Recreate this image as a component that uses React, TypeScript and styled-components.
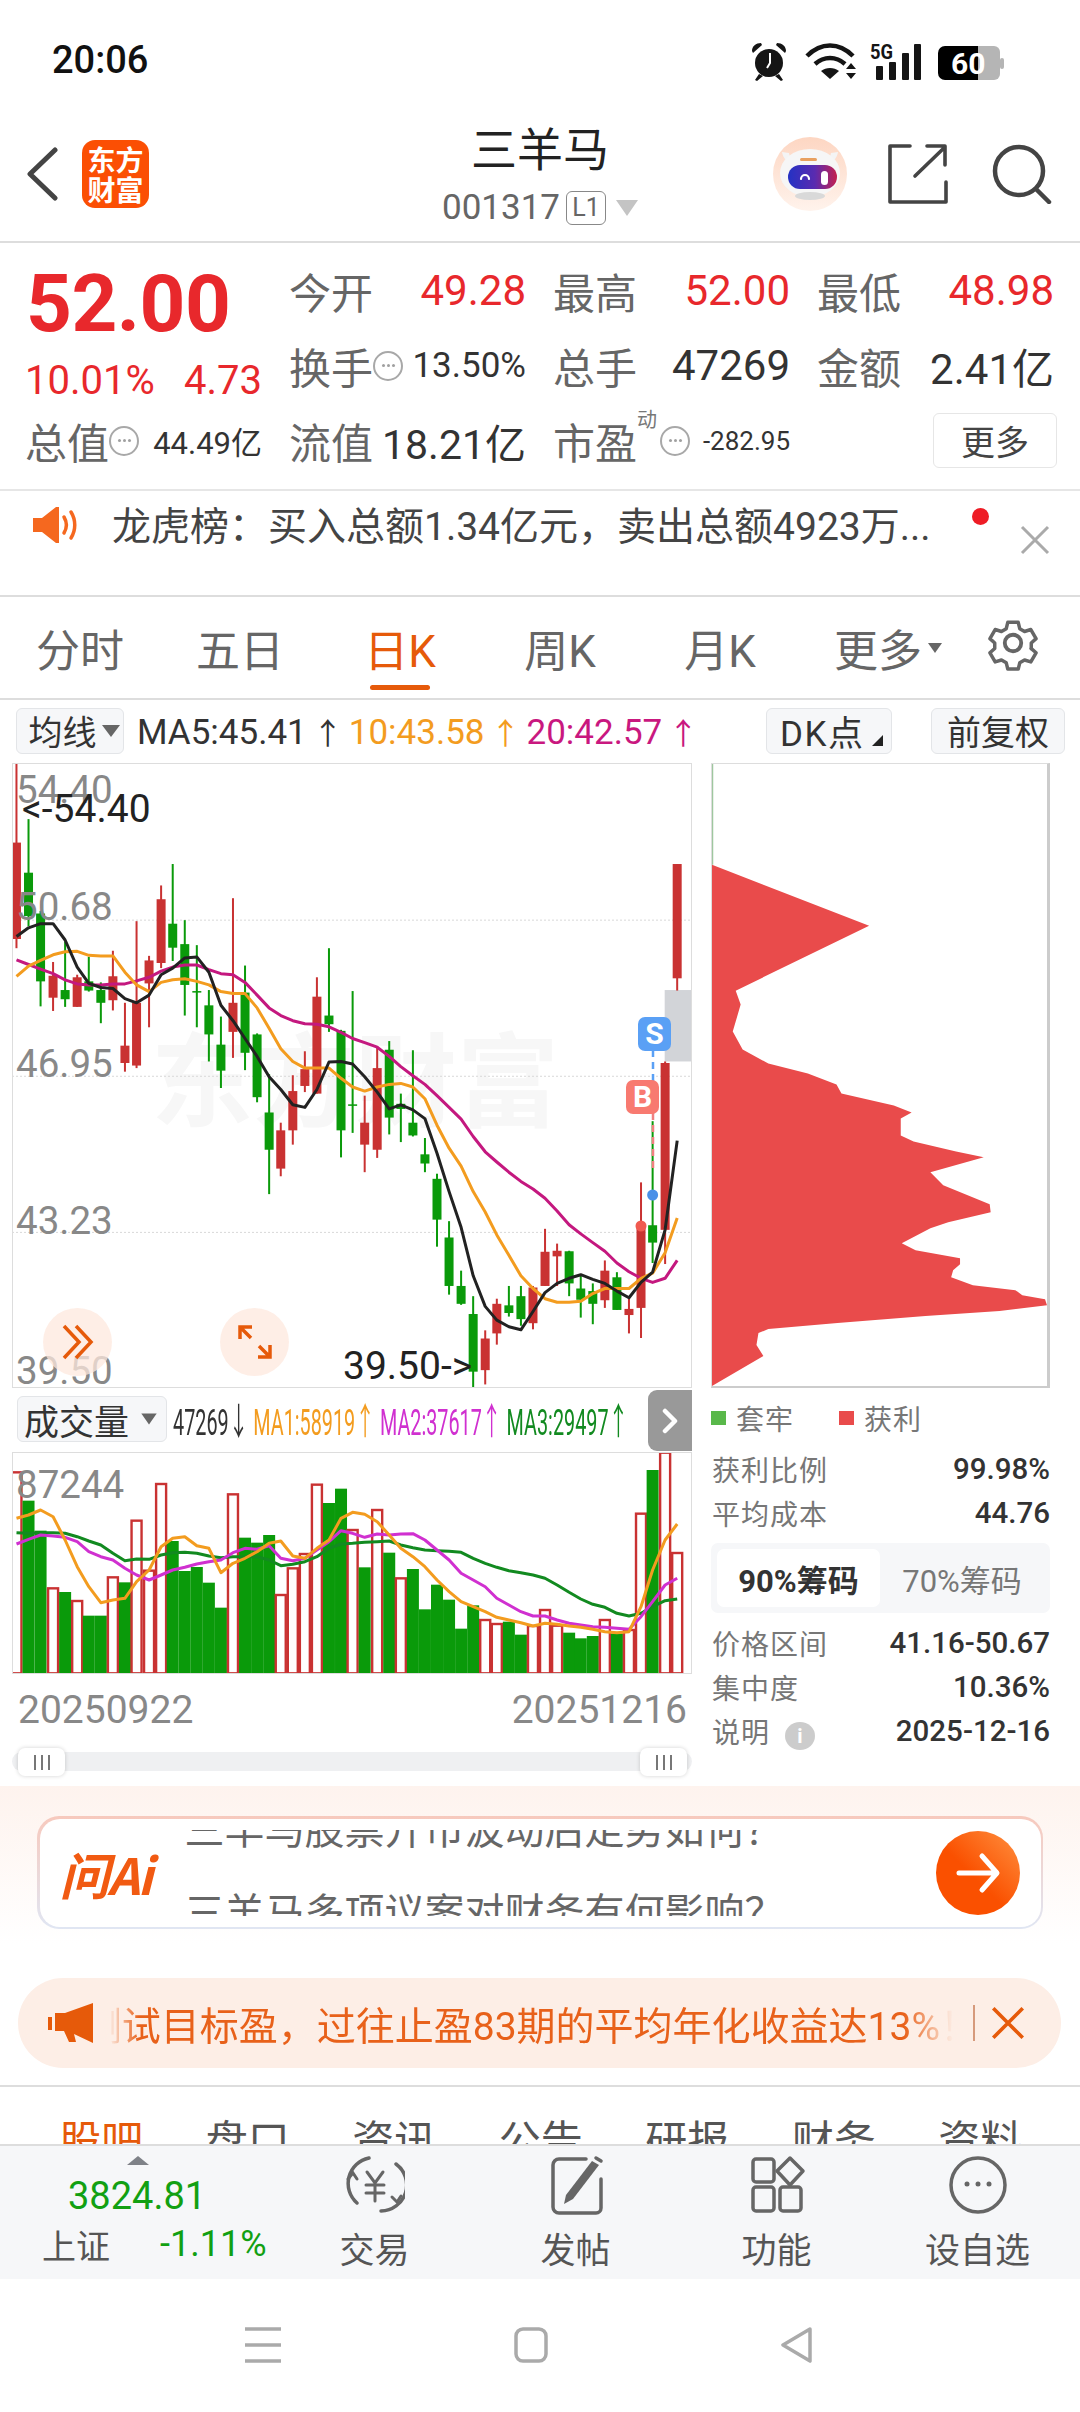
import React from 'react';
import styled, { createGlobalStyle } from 'styled-components';

const GlobalStyle = createGlobalStyle`
  * { box-sizing: border-box; }
  html, body { margin: 0; padding: 0; background: #fff; }
  body { font-family: Roboto, "Noto Sans CJK SC", sans-serif; color: #333; }
`;

const RED = '#e8282c';
const CANDLE_RED = '#c93232';
const CANDLE_GREEN = '#0a9a0a';
const ORANGE = '#e65a0a';

// [x, up?, wickTop, bodyTop, bodyBottom, wickBottom] in chart grid units
type Candle = [number, boolean, number, number, number, number];
const candles: Candle[] = [
  [38, true, 320, 476, 665, 683], [65, false, 430, 535, 620, 640], [92, false, 610, 615, 748, 797],
  [120, true, 710, 737, 780, 806], [147, false, 670, 765, 783, 798], [174, true, 735, 740, 798, 798],
  [200, false, 700, 748, 766, 768], [227, false, 750, 765, 790, 830], [254, true, 688, 738, 785, 805],
  [281, true, 790, 874, 908, 925], [307, true, 630, 790, 913, 918], [335, true, 698, 707, 752, 838],
  [362, true, 560, 587, 712, 722], [388, false, 518, 635, 682, 708], [415, false, 628, 675, 755, 815],
  [442, false, 677, 767, 770, 838], [469, false, 765, 795, 852, 905], [496, false, 817, 872, 923, 957],
  [523, true, 585, 790, 847, 898], [550, false, 717, 770, 888, 922], [577, false, 850, 852, 975, 985],
  [604, false, 930, 1005, 1078, 1165], [630, true, 1025, 1040, 1115, 1130], [657, true, 932, 963, 1040, 1068],
  [684, true, 885, 920, 953, 965], [711, true, 740, 778, 968, 968], [738, false, 683, 815, 832, 847],
  [765, false, 843, 845, 1040, 1093], [791, false, 767, 989, 992, 1045], [818, true, 972, 1025, 1068, 1122],
  [846, true, 875, 918, 1078, 1094], [873, false, 865, 882, 1015, 1048], [899, false, 968, 988, 998, 1063],
  [926, false, 883, 1025, 1050, 1052], [953, false, 1055, 1087, 1105, 1122], [980, false, 1125, 1135, 1215, 1268],
  [1007, false, 1218, 1250, 1345, 1362], [1034, false, 1315, 1345, 1380, 1382], [1061, false, 1365, 1400, 1513, 1545],
  [1088, true, 1432, 1448, 1510, 1538], [1114, true, 1370, 1380, 1438, 1460], [1141, false, 1345, 1383, 1398, 1405],
  [1168, false, 1345, 1365, 1410, 1423], [1195, true, 1345, 1348, 1418, 1430], [1222, true, 1233, 1278, 1345, 1345],
  [1249, true, 1262, 1276, 1287, 1345], [1276, false, 1276, 1277, 1340, 1365], [1302, false, 1322, 1350, 1372, 1407],
  [1329, false, 1340, 1355, 1380, 1420], [1356, true, 1295, 1315, 1373, 1388], [1383, false, 1318, 1328, 1392, 1392],
  [1410, true, 1370, 1390, 1402, 1438], [1437, true, 1142, 1230, 1388, 1447], [1463, false, 1022, 1226, 1260, 1300],
  [1491, true, 905, 908, 1235, 1302], [1518, true, 518, 518, 742, 766],
];

const ma5 = [660,643,635,635,667,720,752,760,762,782,790,775,735,722,702,700,730,795,825,860,895,935,960,990,995,960,906,905,910,935,965,998,990,1000,1017,1085,1160,1230,1325,1385,1412,1425,1431,1395,1358,1340,1330,1323,1332,1340,1355,1368,1338,1318,1235,1060];
const ma10 = [738,718,707,696,690,689,697,698,698,730,755,768,750,745,743,748,755,768,772,772,800,840,880,905,918,918,918,938,955,963,955,950,948,955,978,1030,1075,1110,1160,1200,1245,1285,1325,1350,1370,1377,1377,1375,1360,1350,1350,1350,1330,1320,1280,1212];
const ma20 = [706,715,724,733,745,753,755,755,753,753,747,740,728,720,716,716,725,733,735,750,775,800,815,825,831,832,837,848,860,868,877,895,915,933,950,972,995,1018,1052,1082,1102,1122,1140,1155,1173,1198,1225,1243,1260,1277,1300,1317,1330,1338,1330,1295];

const volumeTops = [277,362,452,625,636,663,707,707,592,607,422,572,312,483,573,561,608,683,343,473,488,465,645,565,522,314,369,326,450,562,390,518,595,567,688,614,659,746,676,720,732,725,764,738,690,737,758,775,768,720,760,750,401,270,218,519];
const volumeUp = [1,0,0,1,0,1,0,0,1,0,1,1,1,0,0,0,0,0,1,0,0,0,1,1,1,1,0,0,1,0,1,0,1,0,0,0,0,0,0,1,1,0,0,1,1,1,0,0,0,1,0,1,1,0,1,1];
const volMa1 = [415,405,390,410,480,560,620,668,660,655,605,570,500,475,470,497,505,578,550,535,515,490,483,528,535,505,480,415,397,403,425,465,505,530,560,600,635,665,680,695,712,720,728,738,730,733,738,742,748,755,758,755,680,570,480,432];
const volMa2 = [492,478,465,468,472,485,515,530,540,565,585,600,585,570,562,552,545,540,518,505,508,497,535,542,535,510,485,452,460,472,462,465,462,461,480,510,540,580,600,620,655,675,695,708,708,720,730,735,740,742,745,748,710,665,615,595];
const volMa3 = [458,460,458,458,460,470,483,495,520,542,537,538,525,518,517,520,528,533,530,530,530,540,557,553,545,530,505,492,490,487,485,483,495,503,510,512,514,517,535,550,562,572,578,585,595,615,637,657,673,682,700,708,700,680,662,657];

// chip distribution outline, x from the left axis, y from the top of the box
const chipOutline =
  '0,101 159,162 24,227 29,241 21,268 31,286 57,300 97,310 126,321 131,330 184,342 202,349 191,355 191,372 ' +
  '204,378 247,388 275,394 221,409 234,422 281,441 282,449 239,459 221,465 192,480 206,487 251,495 251,501 ' +
  '244,507 242,514 264,522 307,527 314,532 337,536 339,542 291,548 216,553 127,560 57,566 47,570 45,582 52,593 0,623';

const px = (v: number) => (v - 28) / 2.24;
const py = (v: number) => (v - 320) / 1.96;
const vy = (v: number) => (v - 216) / 3;
const xs = candles.map((c) => px(c[0]));
const line = (values: number[], map: (v: number) => number) =>
  values.map((v, i) => `${xs[i].toFixed(1)},${map(v).toFixed(1)}`).join(' ');

const Page = styled.div`
  width: 1080px;
  height: 2412px;
  overflow: hidden;
  display: flex;
  flex-direction: column;
  background: #fff;
`;

const StatusBar = styled.div`
  height: 110px;
  flex: none;
  padding: 40px 74px 0 52px;
  display: flex;
  justify-content: space-between;
  align-items: flex-start;
`;

const Clock = styled.span`
  font-size: 38px;
  line-height: 40px;
  font-weight: 500;
  color: #111;
`;

const StatusIcons = styled.div`
  display: flex;
  align-items: center;
  height: 40px;
  margin-top: 2px;
`;

const Header = styled.header`
  height: 133px;
  flex: none;
  display: grid;
  grid-template-columns: 1fr auto 1fr;
  border-bottom: 2px solid #ddd;
`;

const HeaderLeft = styled.div`
  display: flex;
  align-items: center;
  padding: 0 0 4px 26px;
  gap: 24px;
`;

const AppLogo = styled.div`
  width: 67px;
  height: 68px;
  border-radius: 13px;
  background: #fb4f04;
  color: #fff;
  font-family: "Noto Sans CJK SC", sans-serif;
  font-size: 28px;
  line-height: 30px;
  font-weight: 700;
  text-align: center;
  padding-top: 4px;
  white-space: nowrap;
`;

const TitleBlock = styled.div`
  display: flex;
  flex-direction: column;
  align-items: center;
  padding-top: 14px;
`;

const StockName = styled.div`
  font-size: 46px;
  line-height: 52px;
  color: #222;
`;

const CodeRow = styled.div`
  display: flex;
  align-items: center;
  font-size: 35px;
  line-height: 44px;
  color: #666;
  margin: 10px 0 0 0;
`;

const LevelBadge = styled.span`
  border: 1.5px solid #888;
  border-radius: 6px;
  font-size: 25px;
  line-height: 32px;
  width: 40px;
  text-align: center;
  margin-left: 6px;
`;

const DownTriangle = styled.span<{ $color?: string }>`
  width: 0;
  height: 0;
  margin-left: 10px;
  border-left: 11px solid transparent;
  border-right: 11px solid transparent;
  border-top: 16px solid ${(p) => p.$color ?? '#c4c4c4'};
`;

const HeaderRight = styled.div`
  display: flex;
  align-items: center;
  justify-content: flex-end;
  padding: 0 28px 4px 0;
`;

const QuoteGrid = styled.section`
  height: 248px;
  flex: none;
  padding: 10px 24px 0 25px;
  display: grid;
  grid-template-columns: repeat(4, 237px);
  grid-auto-rows: 75px;
  column-gap: 27px;
  border-bottom: 2px solid #e6e6e6;
`;

const Cell = styled.div`
  display: flex;
  align-items: center;
  justify-content: space-between;
  white-space: nowrap;
`;

const LastPrice = styled.div`
  font-size: 80px;
  line-height: 75px;
  font-weight: 700;
  color: ${RED};
  margin: 14px 0 0 1px;
  letter-spacing: -0.5px;
`;

const ChangeCell = styled(Cell)`
  padding-top: 30px;
  font-size: 40px;
  color: ${RED};
`;

const Label = styled.span`
  font-size: 42px;
  color: #666;
`;

const LabelGroup = styled.span`
  display: flex;
  align-items: center;
  position: relative;
`;

const Value = styled.span<{ $size?: number; $red?: boolean }>`
  font-size: ${(p) => p.$size ?? 42}px;
  color: ${(p) => (p.$red ? RED : '#333')};
`;

const HelpDot = styled.span<{ $gap?: number }>`
  width: 30px;
  height: 30px;
  border-radius: 50%;
  border: 2px solid #a8a8a8;
  margin-left: ${(p) => p.$gap ?? 0}px;
  display: flex;
  align-items: center;
  justify-content: center;
  &::before {
    content: '';
    width: 3px;
    height: 3px;
    border-radius: 50%;
    background: #a0a0a0;
    box-shadow: -5px 0 #a0a0a0, 5px 0 #a0a0a0;
  }
`;

const Superscript = styled.span`
  position: absolute;
  left: 84px;
  top: -6px;
  font-size: 20px;
  color: #777;
`;

const MoreButton = styled.button`
  margin: 0 -3px 0 auto;
  width: 124px;
  height: 55px;
  border: 1.5px solid #e6e6e6;
  border-radius: 6px;
  background: #fff;
  font-family: inherit;
  font-size: 34px;
  color: #444;
  padding: 0;
`;

const Notice = styled.section`
  height: 106px;
  flex: none;
  position: relative;
  padding: 16px 0 0 33px;
  display: flex;
  align-items: flex-start;
  border-bottom: 2px solid #ddd;
`;

const NoticeText = styled.span`
  margin-left: 34px;
  font-size: 39px;
  line-height: 40px;
  color: #444;
  white-space: nowrap;
`;

const NoticeDot = styled.span`
  position: absolute;
  left: 972px;
  top: 17px;
  width: 17px;
  height: 17px;
  border-radius: 50%;
  background: #ee1c25;
`;

const NoticeClose = styled.span`
  position: absolute;
  left: 1020px;
  top: 34px;
  display: flex;
`;

const ChartTabs = styled.nav`
  height: 103px;
  flex: none;
  display: grid;
  grid-template-columns: repeat(5, 160px) 176px 104px;
  border-bottom: 2px solid #ddd;
`;

const ChartTab = styled.div<{ $active?: boolean }>`
  position: relative;
  display: flex;
  align-items: center;
  justify-content: center;
  padding-bottom: 0;
  font-size: 44px;
  color: ${(p) => (p.$active ? ORANGE : '#666')};
  &::after {
    content: '';
    display: ${(p) => (p.$active ? 'block' : 'none')};
    position: absolute;
    left: 50px;
    right: 50px;
    bottom: 8px;
    height: 5px;
    border-radius: 3px;
    background: ${ORANGE};
  }
`;

const TabArrow = styled.span`
  width: 0;
  height: 0;
  margin-left: 6px;
  border-left: 7px solid transparent;
  border-right: 7px solid transparent;
  border-top: 10px solid #666;
`;

const Toolbar = styled.div`
  height: 61px;
  flex: none;
  display: flex;
  align-items: center;
  padding: 0 15px 0 16px;
  white-space: nowrap;
`;

const ToolButton = styled.div<{ $width: number }>`
  width: ${(p) => p.$width}px;
  height: 46px;
  flex: none;
  display: flex;
  align-items: center;
  justify-content: center;
  gap: 5px;
  background: #f6f7f9;
  border: 1.5px solid #e3e5e8;
  border-radius: 6px;
  font-size: 34px;
  color: #333;
  position: relative;
`;

const MaSelect = styled(ToolButton)`
  padding-left: 8px;
  & > span {
    margin-left: 0;
    border-left-width: 9px;
    border-right-width: 9px;
    border-top-width: 12px;
  }
`;

const DkButton = styled(ToolButton)`
  justify-content: flex-start;
  padding-left: 13px;
  font-size: 35px;
  letter-spacing: 1.5px;
`;

const CornerMark = styled.span`
  position: absolute;
  right: 8px;
  bottom: 7px;
  width: 0;
  height: 0;
  border-left: 11px solid transparent;
  border-bottom: 11px solid #222;
`;

const MaLegend = styled.div`
  flex: 1;
  margin-left: 13px;
  font-size: 35px;
`;

const Tinted = styled.span<{ $color: string }>`
  color: ${(p) => p.$color};
`;

const LegendArrow = styled.span`
  display: inline-block;
  width: 42px;
  text-align: center;
  font-size: 30px;
`;

const Workspace = styled.div`
  display: flex;
  align-items: flex-start;
  height: 1025px;
  flex: none;
  padding: 2px 0 0 12px;
`;

const ChartColumn = styled.div`
  width: 680px;
  flex: none;
  display: flex;
  flex-direction: column;
`;

const Canvas = styled.div<{ $height: number }>`
  position: relative;
  width: 680px;
  height: ${(p) => p.$height}px;
  border: 1.5px solid #ddd;
  overflow: hidden;
  & > svg {
    position: absolute;
    left: -1.5px;
    top: -1.5px;
    display: block;
  }
`;

const Watermark = styled.span`
  position: absolute;
  left: 138px;
  top: 255px;
  font-family: "Noto Sans CJK SC", sans-serif;
  font-size: 102px;
  line-height: 112px;
  font-weight: 700;
  color: #f7f7f7;
  white-space: nowrap;
`;

const AxisLabel = styled.span<{ $top: number }>`
  position: absolute;
  left: 3px;
  top: ${(p) => p.$top}px;
  font-size: 38.5px;
  line-height: 40px;
  color: #888;
  z-index: 2;
`;

const ExtremeLabel = styled.span<{ $left: number; $top: number }>`
  position: absolute;
  left: ${(p) => p.$left}px;
  top: ${(p) => p.$top}px;
  font-size: 39px;
  line-height: 40px;
  color: #222;
  z-index: 3;
`;

const TradeTag = styled.span<{ $left: number; $top: number; $bg: string }>`
  position: absolute;
  left: ${(p) => p.$left}px;
  top: ${(p) => p.$top}px;
  width: 33px;
  height: 34px;
  border-radius: 7px;
  background: ${(p) => p.$bg};
  color: #fff;
  font-size: 30px;
  line-height: 34px;
  font-weight: 700;
  text-align: center;
  z-index: 3;
`;

const RoundAction = styled.span<{ $left: number }>`
  position: absolute;
  left: ${(p) => p.$left}px;
  top: 544px;
  width: 69px;
  height: 68px;
  border-radius: 50%;
  background: rgba(253, 232, 222, 0.75);
  display: flex;
  align-items: center;
  justify-content: center;
  z-index: 2;
`;

const VolumeHeader = styled.div`
  position: relative;
  height: 64px;
  display: flex;
  align-items: center;
  padding: 0 0 2px 5px;
  white-space: nowrap;
`;

const VolumeSelect = styled(ToolButton)`
  height: 46px;
  font-size: 35px;
`;

const VolumeCaret = styled(DownTriangle)`
  margin-left: 4px;
  transform: scale(0.7);
`;

const VolumeLegend = styled.div`
  margin-left: 6px;
  font-size: 37px;
  transform: scaleX(0.535);
  transform-origin: left center;
`;

const CollapseTab = styled.span`
  position: absolute;
  right: 0;
  top: 2px;
  width: 44px;
  height: 61px;
  background: #999;
  border-radius: 9px 0 0 9px;
  display: flex;
  align-items: center;
  justify-content: center;
  z-index: 4;
`;

const DateRow = styled.div`
  height: 71px;
  display: flex;
  justify-content: space-between;
  align-items: center;
  padding: 0 5px 0 6px;
  font-size: 39px;
  color: #888;
`;

const RangeTrack = styled.div`
  position: relative;
  margin-top: 7px;
  height: 19px;
  background: #eff0f2;
  border-radius: 10px;
`;

const RangeHandle = styled.span<{ $side: 'left' | 'right' }>`
  position: absolute;
  ${(p) => p.$side}: ${(p) => (p.$side === 'left' ? 6 : 5)}px;
  top: -4px;
  width: 47px;
  height: 28px;
  border-radius: 7px;
  background: #fff;
  box-shadow: 0 0 4px rgba(0, 0, 0, 0.18);
  display: flex;
  align-items: center;
  justify-content: center;
  gap: 5px;
  & > i {
    width: 2px;
    height: 15px;
    background: #777;
  }
`;

const ChipColumn = styled.aside`
  width: 339px;
  margin-left: 19px;
  flex: none;
`;

const ChipBox = styled.div`
  height: 625px;
  border: 1.5px solid #ddd;
  border-right: 3px solid #ccc;
  border-bottom: 2px solid #ccc;
  & > svg {
    display: block;
  }
`;

const ChipLegend = styled.div`
  height: 59px;
  display: flex;
  align-items: center;
  font-size: 28px;
  color: #777;
  letter-spacing: 1px;
`;

const Swatch = styled.span<{ $color: string; $gap?: number }>`
  width: 15px;
  height: 14px;
  margin: 0 10px 0 ${(p) => p.$gap ?? 0}px;
  background: ${(p) => p.$color};
`;

const ChipRow = styled.div`
  height: 44px;
  display: flex;
  align-items: center;
  justify-content: space-between;
  padding-left: 1px;
  font-size: 28px;
  color: #777;
  letter-spacing: 1px;
  white-space: nowrap;
`;

const ChipValue = styled.span`
  font-weight: 500;
  color: #333;
  font-size: 29.5px;
  letter-spacing: 0;
`;

const InfoPill = styled.span`
  display: inline-block;
  width: 30px;
  height: 28px;
  margin-left: 15px;
  border-radius: 50%;
  background: #ccc;
  color: #fff;
  font-size: 20px;
  line-height: 28px;
  font-weight: 700;
  text-align: center;
  vertical-align: middle;
  letter-spacing: 0;
`;

const RatioSwitch = styled.div`
  height: 70px;
  margin: 8px 0 8px;
  padding: 6px;
  background: #f6f7f9;
  border-radius: 7px;
  display: grid;
  grid-template-columns: 163px 1fr;
`;

const RatioOption = styled.div<{ $active?: boolean }>`
  display: flex;
  align-items: center;
  justify-content: center;
  border-radius: 7px;
  font-size: 31px;
  font-weight: ${(p) => (p.$active ? 700 : 400)};
  color: ${(p) => (p.$active ? '#333' : '#777')};
  background: ${(p) => (p.$active ? '#fff' : 'transparent')};
`;

const AiSection = styled.section`
  height: 192px;
  flex: none;
  padding: 30px 37px 0 37px;
  background: linear-gradient(180deg, #fef3ee 0%, #fff 82%);
`;

const AiBorder = styled.div`
  height: 113px;
  padding: 2.5px;
  border-radius: 22px;
  background: linear-gradient(180deg, #f7c9bd 0%, #e0e6f3 100%);
`;

const AiCard = styled.div`
  height: 100%;
  border-radius: 20px;
  background: #fff;
  display: flex;
  align-items: center;
  padding: 0 21px 0 20px;
`;

const AiLogo = styled.span`
  width: 125px;
  font-family: "Noto Sans CJK SC", sans-serif;
  font-size: 50px;
  font-weight: 700;
  font-style: italic;
  color: #f15a12;
  flex: none;
  letter-spacing: -2px;
`;

const Prompts = styled.div`
  flex: 1;
  height: 86px;
  overflow: hidden;
  display: flex;
  flex-direction: column;
  justify-content: center;
  gap: 43px;
  font-size: 40px;
  color: #666;
  white-space: nowrap;
  & > span {
    flex: none;
    line-height: 40px;
  }
`;

const GoButton = styled.span`
  width: 84px;
  height: 84px;
  flex: none;
  border-radius: 50%;
  background: linear-gradient(45deg, #fa5000 45%, #ff9140 100%);
  display: flex;
  align-items: center;
  justify-content: center;
`;

const PromoBar = styled.div`
  height: 90px;
  flex: none;
  margin: 0 19px 0 18px;
  border-radius: 45px;
  background: #fdeee6;
  display: flex;
  align-items: center;
  padding: 0 22px 0 30px;
`;

const PromoHorn = styled.svg`
  flex: none;
`;

const PromoWindow = styled.div`
  width: 844px;
  margin-left: 15px;
  overflow: hidden;
  display: flex;
  justify-content: flex-end;
  white-space: nowrap;
  font-size: 39px;
  color: #e8611a;
  -webkit-mask-image: linear-gradient(90deg, transparent 0, #000 30px, #000 795px, transparent 100%);
  mask-image: linear-gradient(90deg, transparent 0, #000 30px, #000 795px, transparent 100%);
`;

const PromoText = styled.span`
  flex: none;
  margin-right: -26px;
`;

const PromoDivider = styled.span`
  width: 1.5px;
  height: 36px;
  margin: 0 16px 0 20px;
  background: #d69a7c;
`;

const StockTabs = styled.nav`
  height: 59px;
  flex: none;
  margin-top: 17px;
  border-top: 2px solid #ddd;
  overflow: hidden;
  display: grid;
  grid-template-columns: repeat(7, 146.5px);
  padding: 31px 0 0 28px;
`;

const StockTab = styled.span<{ $active?: boolean }>`
  font-size: 42px;
  line-height: 48px;
  text-align: center;
  color: ${(p) => (p.$active ? ORANGE : '#555')};
`;

const BottomBar = styled.div`
  height: 135px;
  flex: none;
  background: #f6f7f9;
  border-top: 2px solid #ddd;
  display: grid;
  grid-template-columns: 274px repeat(4, 201px);
`;

const IndexBlock = styled.div`
  position: relative;
  padding: 26px 0 0 42px;
  display: grid;
  grid-template-columns: 118px auto;
  grid-template-rows: 48px 48px;
  align-items: center;
`;

const IndexPrice = styled.span`
  grid-column: 1 / 3;
  padding-left: 26px;
  font-size: 38px;
  color: #12a012;
`;

const IndexName = styled.span`
  font-size: 34px;
  color: #555;
`;

const IndexChange = styled.span`
  font-size: 36px;
  color: #12a012;
`;

const IndexCaret = styled.span`
  position: absolute;
  left: 127px;
  top: 10px;
  width: 0;
  height: 0;
  border-left: 11px solid transparent;
  border-right: 11px solid transparent;
  border-bottom: 9px solid #7f8288;
`;

const BarAction = styled.div`
  display: flex;
  flex-direction: column;
  align-items: center;
  padding-top: 9px;
  font-size: 35px;
  line-height: 44px;
  color: #555;
  & > svg {
    margin-bottom: 15px;
  }
`;

const NavBar = styled.div`
  flex: 1;
  display: grid;
  grid-template-columns: 245px 35px 234px 34px 232px 33px;
  padding-top: 48px;
`;

const NavSpacer = styled.span``;

const NavDraw = styled.svg`
  display: block;
`;

const AvatarGap = styled.span`
  width: 40px;
`;

const ToolGap = styled.span`
  width: 39px;
  flex: none;
`;

// Status bar glyphs, all one drawing so the spacing stays fixed
const StatusGlyphs = () => (
  <svg width="256" height="40" viewBox="0 0 256 40">
    <g fill="#151515">
      <circle cx="19" cy="21" r="14" />
      <path d="M2 9c0-5 4-8 9-8l1 2-9 8zM36 9c0-5-4-8-9-8l-1 2 9 8z" />
      <path d="M9 32l-4 6 2 1 6-5zM29 32l4 6-2 1-6-5z" />
    </g>
    <path d="M20 11v10l-3 5" stroke="#fff" strokeWidth="2" fill="none" />
    <g fill="none" stroke="#151515" strokeWidth="4.5">
      <path d="M57 14c14-14 32-14 46 0" />
      <path d="M65 22c9-8 21-8 30 0" />
    </g>
    <path d="M80 37l-9-8c5-4 13-4 18 0z" fill="#151515" />
    <path d="M96 27l5-6 5 6zM96 31l5 6 5-6z" fill="#151515" />
    <text x="120" y="17" fontSize="20" fontWeight="700" fontFamily="Roboto" fill="#151515" textLength="23" lengthAdjust="spacingAndGlyphs">5G</text>
    <g fill="#151515">
      <rect x="126" y="24" width="7" height="14" rx="1" />
      <rect x="139" y="20" width="7" height="18" rx="1" />
      <rect x="152" y="11" width="7" height="27" rx="1" />
      <rect x="164" y="2" width="7" height="36" rx="1" />
    </g>
    <path d="M188 11a7 7 0 0 1 7-7h33v34h-33a7 7 0 0 1-7-7z" fill="#000" />
    <path d="M228 4h16a6 6 0 0 1 6 6v22a6 6 0 0 1-6 6h-16z" fill="#b5b5b5" />
    <rect x="250" y="16" width="4" height="11" rx="2" fill="#b5b5b5" />
    <text x="201" y="32" fontSize="30" fontWeight="700" fontFamily="Roboto" fill="#fff">60</text>
  </svg>
);

const BackIcon = () => (
  <svg width="32" height="54" viewBox="0 0 32 54">
    <path d="M29 3L4 27l25 24" fill="none" stroke="#444" strokeWidth="5" strokeLinecap="round" strokeLinejoin="round" />
  </svg>
);

const RobotAvatar = () => (
  <svg width="76" height="76" viewBox="0 0 76 76">
    <defs>
      <linearGradient id="avatarBg" x1="0" y1="0" x2="0" y2="1">
        <stop offset="0" stopColor="#fdd6c2" />
        <stop offset="1" stopColor="#fff3ec" />
      </linearGradient>
      <linearGradient id="visor" x1="0" y1="0" x2="1" y2="0">
        <stop offset="0" stopColor="#2432c4" />
        <stop offset="0.55" stopColor="#5a2bb0" />
        <stop offset="1" stopColor="#c4204f" />
      </linearGradient>
    </defs>
    <circle cx="38" cy="38" r="37" fill="url(#avatarBg)" />
    <path d="M10 16c1 6 4 9 9 10l-2-9zM66 16c-1 6-4 9-9 10l2-9z" fill="#f4f4f4" />
    <ellipse cx="38" cy="37" rx="30" ry="24" fill="#f6f6f6" />
    <ellipse cx="38" cy="60" rx="15" ry="4" fill="#d9d9d9" />
    <rect x="16" y="29" width="49" height="24" rx="12" fill="url(#visor)" />
    <path d="M29 43a4 4 0 0 1 8 0" stroke="#fff" strokeWidth="2.2" fill="none" strokeLinecap="round" />
    <rect x="49" y="35" width="7" height="14" rx="3.5" fill="#fff" />
    <rect x="28" y="22" width="17" height="3" rx="1.5" fill="#e8a060" />
  </svg>
);

const ShareIcon = () => (
  <svg width="60" height="60" viewBox="0 0 60 60" style={{ marginRight: 44 }}>
    <path d="M22 2H2v56h56V38" fill="none" stroke="#444" strokeWidth="3.6" strokeLinecap="round" strokeLinejoin="round" />
    <path d="M27 32L57 3M39 2h18v19" fill="none" stroke="#444" strokeWidth="3.6" strokeLinecap="round" strokeLinejoin="round" />
  </svg>
);

const SearchIcon = () => (
  <svg width="60" height="60" viewBox="0 0 60 60">
    <circle cx="27" cy="27" r="24" fill="none" stroke="#444" strokeWidth="4.5" />
    <path d="M44 45l13 13" stroke="#444" strokeWidth="4.5" strokeLinecap="round" />
  </svg>
);

const SpeakerIcon = () => (
  <svg width="45" height="36" viewBox="0 0 45 36">
    <path d="M0 11h9L23 0h3v36h-3L9 25H0z" fill="#f5681f" />
    <path d="M31 10c3 5 3 11 0 16M38 5c5 8 5 18 0 26" fill="none" stroke="#f5681f" strokeWidth="3.5" strokeLinecap="round" />
  </svg>
);

const CloseMark = ({ size, color, width }: { size: number; color: string; width: number }) => (
  <svg width={size} height={size} viewBox="0 0 30 30">
    <path d="M2 2l26 26M28 2L2 28" stroke={color} strokeWidth={width} fill="none" />
  </svg>
);

const GearIcon = () => (
  <svg width="58" height="58" viewBox="0 0 24 24" fill="none" stroke="#666" strokeWidth="1.6" strokeLinejoin="round" style={{ margin: 'auto', transform: 'translate(-15px,-5px)' }}>
    <path d="M9.6 2.5h4.8l.7 2.9 2.2 1.3 2.9-.9 2.4 4.2-2.2 2 0 2.6-.1-.1 2.3 2-2.4 4.2-2.9-.9-2.2 1.3-.7 2.9H9.6l-.7-2.9-2.2-1.3-2.9.9-2.4-4.2 2.2-2V12l-2.2-2 2.4-4.2 2.9.9 2.2-1.3z" transform="translate(1.2 1.2) scale(.9)" />
    <circle cx="12" cy="12" r="3.4" />
  </svg>
);

const PriceChart = () => (
  <svg width="680" height="625" viewBox="0 0 680 625">
    {[628, 934, 1240].map((y) => (
      <line key={y} x1="0" x2="680" y1={py(y)} y2={py(y)} stroke="#d8d8d8" strokeWidth="1" strokeDasharray="2 2" />
    ))}
    <rect x={px(1490)} y={py(765)} width="27" height={py(905) - py(765)} fill="#d2d4d8" />
    {candles.map(([x, up, wickTop, top, bottom, wickBottom]) => {
      const color = up ? CANDLE_RED : CANDLE_GREEN;
      return (
        <g key={x} fill={color}>
          <rect x={px(x) - 1} y={py(wickTop)} width="2" height={py(wickBottom) - py(wickTop)} />
          <rect x={px(x) - 4.5} y={py(top)} width="9" height={Math.max(py(bottom) - py(top), 1.5)} />
        </g>
      );
    })}
    <polyline points={line(ma20, py)} fill="none" stroke="#c4187f" strokeWidth="3" strokeLinejoin="round" />
    <polyline points={line(ma10, py)} fill="none" stroke="#f39c1f" strokeWidth="3" strokeLinejoin="round" />
    <polyline points={line(ma5, py)} fill="none" stroke="#222" strokeWidth="3" strokeLinejoin="round" />
    <line x1="641" x2="641" y1="350" y2="408" stroke="#f08080" strokeWidth="2.5" strokeDasharray="7 5" />
    <line x1="641" x2="641" y1="287" y2="346" stroke="#5aa0f5" strokeWidth="2.5" strokeDasharray="7 5" />
    <circle cx={px(1463)} cy="432" r="5.5" fill="#4a90e8" />
    <circle cx={px(1437)} cy="463" r="5.5" fill="#f05a50" />
  </svg>
);

const VolumeChart = () => (
  <svg width="680" height="222" viewBox="0 0 680 222">
    {volumeTops.map((top, i) =>
      volumeUp[i] ? (
        <rect key={i} x={xs[i] - 5} y={vy(top)} width="10" height={vy(880) - vy(top)} fill="#fff" stroke={CANDLE_RED} strokeWidth="2.4" />
      ) : (
        <rect key={i} x={xs[i] - 6} y={vy(top)} width="12" height={vy(880) - vy(top)} fill={CANDLE_GREEN} />
      ),
    )}
    <polyline points={line(volMa3, vy)} fill="none" stroke="#128a20" strokeWidth="3" strokeLinejoin="round" />
    <polyline points={line(volMa2, vy)} fill="none" stroke="#d030d0" strokeWidth="3" strokeLinejoin="round" />
    <polyline points={line(volMa1, vy)} fill="none" stroke="#f39c1f" strokeWidth="3" strokeLinejoin="round" />
  </svg>
);

const ChipChart = () => (
  <svg width="335" height="622" viewBox="0 0 339 623" preserveAspectRatio="none">
    <line x1="0.5" x2="0.5" y1="0" y2="101" stroke="#9fc79f" strokeWidth="1.5" />
    <polygon points={chipOutline} fill="#e94b4b" />
  </svg>
);

const TradeIcon = () => (
  <svg width="60" height="60" viewBox="0 0 60 60" fill="none" stroke="#666" strokeWidth="3.5" strokeLinecap="round">
    <path d="M24 4a26 26 0 0 0-12 45M36 57a26 26 0 0 0 15-47" transform="translate(0 -1)" />
    <path d="M3 24l5-6 4 6M56 41l-4 6-5-5" strokeWidth="3" />
    <path d="M22 17l8 11 8-11M21 30h18M21 38h18M30 28v18" strokeWidth="3" />
  </svg>
);

const PostIcon = () => (
  <svg width="60" height="60" viewBox="0 0 60 60" fill="none" stroke="#666" strokeWidth="3.5" strokeLinecap="round" strokeLinejoin="round">
    <path d="M40 4H13a6 6 0 0 0-6 6v42a6 6 0 0 0 6 6h37a5 5 0 0 0 5-5V24" />
    <path d="M20 40L46 6l7 4-26 34-9 5z" fill="#666" stroke="none" />
    <path d="M50 3l5 3" />
  </svg>
);

const FunctionIcon = () => (
  <svg width="60" height="60" viewBox="0 0 60 60" fill="none" stroke="#666" strokeWidth="3.5" strokeLinejoin="round">
    <rect x="6" y="4" width="21" height="23" rx="3" />
    <path d="M43 3l13 13-13 14-13-14z" />
    <rect x="6" y="32" width="21" height="24" rx="3" />
    <rect x="33" y="32" width="21" height="24" rx="3" />
  </svg>
);

const MoreCircleIcon = () => (
  <svg width="60" height="60" viewBox="0 0 60 60" fill="none" stroke="#666" strokeWidth="3.5">
    <circle cx="30" cy="30" r="27" />
    <circle cx="19" cy="29" r="2.5" fill="#666" stroke="none" />
    <circle cx="30" cy="29" r="2.5" fill="#666" stroke="none" />
    <circle cx="41" cy="29" r="2.5" fill="#666" stroke="none" />
  </svg>
);

export default function App() {
  return (
    <Page>
      <GlobalStyle />
      <StatusBar>
        <Clock>20:06</Clock>
        <StatusIcons>
          <StatusGlyphs />
        </StatusIcons>
      </StatusBar>

      <Header>
        <HeaderLeft>
          <BackIcon />
          <AppLogo>
            东方
            <br />
            财富
          </AppLogo>
        </HeaderLeft>
        <TitleBlock>
          <StockName>三羊马</StockName>
          <CodeRow>
            001317
            <LevelBadge>L1</LevelBadge>
            <DownTriangle />
          </CodeRow>
        </TitleBlock>
        <HeaderRight>
          <RobotAvatar />
          <AvatarGap />
          <ShareIcon />
          <SearchIcon />
        </HeaderRight>
      </Header>

      <QuoteGrid>
        <LastPrice>52.00</LastPrice>
        <Cell>
          <Label>今开</Label>
          <Value $red>49.28</Value>
        </Cell>
        <Cell>
          <Label>最高</Label>
          <Value $red>52.00</Value>
        </Cell>
        <Cell>
          <Label>最低</Label>
          <Value $red>48.98</Value>
        </Cell>

        <ChangeCell>
          <span>10.01%</span>
          <span>4.73</span>
        </ChangeCell>
        <Cell>
          <LabelGroup>
            <Label>换手</Label>
            <HelpDot />
          </LabelGroup>
          <Value $size={35}>13.50%</Value>
        </Cell>
        <Cell>
          <Label>总手</Label>
          <Value>47269</Value>
        </Cell>
        <Cell>
          <Label>金额</Label>
          <Value>2.41亿</Value>
        </Cell>

        <Cell>
          <LabelGroup>
            <Label>总值</Label>
            <HelpDot />
          </LabelGroup>
          <Value $size={31}>44.49亿</Value>
        </Cell>
        <Cell>
          <Label>流值</Label>
          <Value $size={41}>18.21亿</Value>
        </Cell>
        <Cell>
          <LabelGroup>
            <Label>市盈</Label>
            <Superscript>动</Superscript>
            <HelpDot $gap={23} />
          </LabelGroup>
          <Value $size={26}>-282.95</Value>
        </Cell>
        <Cell>
          <MoreButton>更多</MoreButton>
        </Cell>
      </QuoteGrid>

      <Notice>
        <SpeakerIcon />
        <NoticeText>龙虎榜：买入总额1.34亿元，卖出总额4923万...</NoticeText>
        <NoticeDot />
        <NoticeClose>
          <CloseMark size={30} color="#aaa" width={3} />
        </NoticeClose>
      </Notice>

      <ChartTabs>
        <ChartTab>分时</ChartTab>
        <ChartTab>五日</ChartTab>
        <ChartTab $active>日K</ChartTab>
        <ChartTab>周K</ChartTab>
        <ChartTab>月K</ChartTab>
        <ChartTab>
          更多
          <TabArrow />
        </ChartTab>
        <GearIcon />
      </ChartTabs>

      <Toolbar>
        <MaSelect $width={108}>
          均线
          <TabArrow />
        </MaSelect>
        <MaLegend>
          MA5:45.41<LegendArrow>↑</LegendArrow>
          <Tinted $color="#f39c1f">
            10:43.58<LegendArrow>↑</LegendArrow>
          </Tinted>
          <Tinted $color="#c9187f">
            20:42.57<LegendArrow>↑</LegendArrow>
          </Tinted>
        </MaLegend>
        <DkButton $width={126}>
          DK点
          <CornerMark />
        </DkButton>
        <ToolGap />
        <ToolButton $width={134}>前复权</ToolButton>
      </Toolbar>

      <Workspace>
        <ChartColumn>
          <Canvas $height={625}>
            <Watermark>东方财富</Watermark>
            <PriceChart />
            <AxisLabel $top={6}>54.40</AxisLabel>
            <AxisLabel $top={123}>50.68</AxisLabel>
            <AxisLabel $top={280}>46.95</AxisLabel>
            <AxisLabel $top={437}>43.23</AxisLabel>
            <AxisLabel $top={587}>39.50</AxisLabel>
            <ExtremeLabel $left={9} $top={25}>&lt;-54.40</ExtremeLabel>
            <ExtremeLabel $left={330} $top={582}>39.50-&gt;</ExtremeLabel>
            <TradeTag $left={625} $top={253} $bg="#5aa0f5">S</TradeTag>
            <TradeTag $left={613} $top={316} $bg="#f87a70">B</TradeTag>
            <RoundAction $left={30}>
              <svg width="32" height="36" viewBox="0 0 32 36" fill="none" stroke={ORANGE} strokeWidth="3.5">
                <path d="M2 2l15 16L2 34M14 2l15 16-15 16" />
              </svg>
            </RoundAction>
            <RoundAction $left={207}>
              <svg width="36" height="36" viewBox="0 0 36 36" fill="none" stroke={ORANGE} strokeWidth="3.5">
                <path d="M3 15V3h12M3 3l11 11M33 21v12H21M33 33L22 22" />
              </svg>
            </RoundAction>
          </Canvas>

          <VolumeHeader>
            <VolumeSelect $width={150}>
              成交量
              <VolumeCaret $color="#666" />
            </VolumeSelect>
            <VolumeLegend>
              47269↓ <Tinted $color="#f39c1f">MA1:58919↑</Tinted> <Tinted $color="#d030d0">MA2:37617↑</Tinted>{' '}
              <Tinted $color="#128a20">MA3:29497↑</Tinted>
            </VolumeLegend>
            <CollapseTab>
              <svg width="18" height="26" viewBox="0 0 18 26">
                <path d="M4 3l10 10L4 23" fill="none" stroke="#fff" strokeWidth="4.5" strokeLinecap="round" strokeLinejoin="round" />
              </svg>
            </CollapseTab>
          </VolumeHeader>

          <Canvas $height={222}>
            <VolumeChart />
            <AxisLabel $top={12}>87244</AxisLabel>
          </Canvas>

          <DateRow>
            <span>20250922</span>
            <span>20251216</span>
          </DateRow>
          <RangeTrack>
            <RangeHandle $side="left">
              <i />
              <i />
              <i />
            </RangeHandle>
            <RangeHandle $side="right">
              <i />
              <i />
              <i />
            </RangeHandle>
          </RangeTrack>
        </ChartColumn>

        <ChipColumn>
          <ChipBox>
            <ChipChart />
          </ChipBox>
          <ChipLegend>
            <Swatch $color="#59b84a" />
            套牢
            <Swatch $color="#e94b4b" $gap={45} />
            获利
          </ChipLegend>
          <ChipRow>
            获利比例
            <ChipValue>99.98%</ChipValue>
          </ChipRow>
          <ChipRow>
            平均成本
            <ChipValue>44.76</ChipValue>
          </ChipRow>
          <RatioSwitch>
            <RatioOption $active>90%筹码</RatioOption>
            <RatioOption>70%筹码</RatioOption>
          </RatioSwitch>
          <ChipRow>
            价格区间
            <ChipValue>41.16-50.67</ChipValue>
          </ChipRow>
          <ChipRow>
            集中度
            <ChipValue>10.36%</ChipValue>
          </ChipRow>
          <ChipRow>
            <span>
              说明
              <InfoPill>i</InfoPill>
            </span>
            <ChipValue>2025-12-16</ChipValue>
          </ChipRow>
        </ChipColumn>
      </Workspace>

      <AiSection>
        <AiBorder>
          <AiCard>
            <AiLogo>问Ai</AiLogo>
            <Prompts>
              <span>三羊马股票开市波动后走势如何？</span>
              <span>三羊马多项议案对财务有何影响？</span>
            </Prompts>
            <GoButton>
              <svg width="46" height="46" viewBox="0 0 46 46" fill="none" stroke="#fff" strokeWidth="5" strokeLinecap="round" strokeLinejoin="round">
                <path d="M4 23h37M27 6l15 17-15 17" />
              </svg>
            </GoButton>
          </AiCard>
        </AiBorder>
      </AiSection>

      <PromoBar>
        <PromoHorn width="46" height="40" viewBox="0 0 46 40">
          <rect x="0" y="14" width="4" height="13" fill={ORANGE} />
          <path d="M7 10h10L45 0v40L26 31l2 8h-7l-5-11H7z" fill={ORANGE} />
        </PromoHorn>
        <PromoWindow>
          <PromoText>测试目标盈，过往止盈83期的平均年化收益达13%！</PromoText>
        </PromoWindow>
        <PromoDivider />
        <CloseMark size={34} color={ORANGE} width={3.2} />
      </PromoBar>

      <StockTabs>
        <StockTab $active>股吧</StockTab>
        <StockTab>盘口</StockTab>
        <StockTab>资讯</StockTab>
        <StockTab>公告</StockTab>
        <StockTab>研报</StockTab>
        <StockTab>财务</StockTab>
        <StockTab>资料</StockTab>
      </StockTabs>

      <BottomBar>
        <IndexBlock>
          <IndexCaret />
          <IndexPrice>3824.81</IndexPrice>
          <IndexName>上证</IndexName>
          <IndexChange>-1.11%</IndexChange>
        </IndexBlock>
        <BarAction>
          <TradeIcon />
          交易
        </BarAction>
        <BarAction>
          <PostIcon />
          发帖
        </BarAction>
        <BarAction>
          <FunctionIcon />
          功能
        </BarAction>
        <BarAction>
          <MoreCircleIcon />
          设自选
        </BarAction>
      </BottomBar>

      <NavBar>
        <NavSpacer />
        <NavDraw width="36" height="36" viewBox="0 0 36 36">
          <path d="M0 2h36M0 18h36M0 34h36" stroke="#aaa" strokeWidth="3.5" />
        </NavDraw>
        <NavSpacer />
        <NavDraw width="34" height="36" viewBox="0 0 34 36">
          <rect x="2" y="2" width="30" height="32" rx="7" fill="none" stroke="#aaa" strokeWidth="3.5" />
        </NavDraw>
        <NavSpacer />
        <NavDraw width="33" height="36" viewBox="0 0 33 36">
          <path d="M30 2L3 18l27 16z" fill="none" stroke="#aaa" strokeWidth="3.5" strokeLinejoin="round" />
        </NavDraw>
      </NavBar>
    </Page>
  );
}
